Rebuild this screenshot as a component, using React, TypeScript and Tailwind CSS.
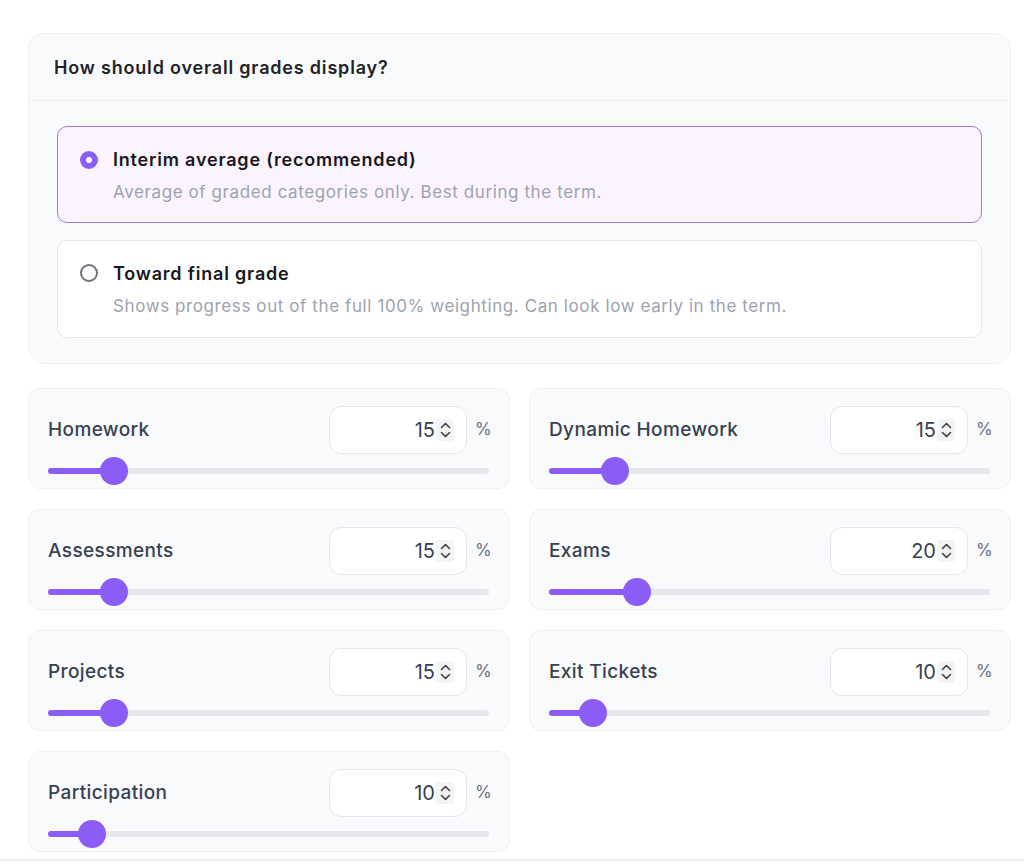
import React from "react";

const cats: { name: string; v: number }[] = [
  { name: "Homework", v: 15 },
  { name: "Dynamic Homework", v: 15 },
  { name: "Assessments", v: 15 },
  { name: "Exams", v: 20 },
  { name: "Projects", v: 15 },
  { name: "Exit Tickets", v: 10 },
  { name: "Participation", v: 10 },
];

function Spinner() {
  return (
    <span className="ml-[1px] flex h-[22px] w-[18px] items-center justify-center rounded-[4px] bg-[#f3f4f6]">
      <svg width="13" height="20" viewBox="0 0 13 20" fill="none" stroke="#3f3f46" strokeWidth="1.6" strokeLinecap="round" strokeLinejoin="round">
        <path d="M2.5 7.5 L6.5 3.5 L10.5 7.5" />
        <path d="M2.5 12.5 L6.5 16.5 L10.5 12.5" />
      </svg>
    </span>
  );
}

function SliderCard({ name, v }: { name: string; v: number }) {
  return (
    <div className="rounded-xl border border-[#eff1f3] bg-[#f9fafb] pl-[19px] pr-[20px] pt-[17px] pb-[4px]">
      <div className="flex h-[48px] items-center">
        <div className="flex-1 text-[19px] font-medium tracking-[0.02em] text-[#374151]">{name}</div>
        <div className="flex h-[48px] w-[138px] items-center justify-end rounded-xl border border-[#e5e7eb] bg-white pr-[12px]">
          <span className="text-[20px] text-[#374151]">{v}</span>
          <Spinner />
        </div>
        <div className="ml-[8px] w-[14px] text-[17px] text-[#6b7280]">%</div>
      </div>
      <div className="relative mt-[2px] h-[28px]">
        <div className="absolute left-0 right-0 top-[12px] h-[6px] rounded-full bg-[#e5e7eb]" />
        <div className="absolute left-0 top-[12px] h-[6px] rounded-full bg-[#8b5cf6]" style={{ width: `${v}%` }} />
        <div
          className="absolute top-[1px] h-[28px] w-[28px] -translate-x-1/2 rounded-full bg-[#8b5cf6]"
          style={{ left: `${v}%` }}
        />
      </div>
    </div>
  );
}

export default function App() {
  return (
    <div className="min-h-[862px] bg-white" style={{ fontFamily: "Inter, 'Noto Sans', sans-serif" }}>
      <div className="pl-[28px] pr-[13px] pt-[33px]">
        <div className="rounded-2xl border border-[#f0f1f3] bg-[#f9fafb]">
          <div className="flex h-[67px] items-center border-b border-[#f0f1f3] px-[25px] text-[18px] font-semibold tracking-[0.045em] text-[#1f2328]">
            How should overall grades display?
          </div>
          <div className="flex flex-col gap-[17px] px-[28px] pt-[25px] pb-[25px]">
            <div className="rounded-[10px] border-[1.5px] border-[#9b7fd6] bg-[#fbf4fe] pl-[22px] pt-[19px] pb-[16px]">
              <div className="flex items-center gap-[15px]">
                <span className="flex h-[18px] w-[18px] items-center justify-center rounded-full bg-[#8b5cf6]">
                  <span className="h-[6px] w-[6px] rounded-full bg-white" />
                </span>
                <span className="text-[18px] font-semibold tracking-[0.045em] text-[#18181b]">Interim average (recommended)</span>
              </div>
              <div className="mt-[7px] pl-[33px] text-[17px] tracking-[0.035em] text-[#9ca3af]">
                Average of graded categories only. Best during the term.
              </div>
            </div>
            <div className="rounded-[10px] border border-[#e5e7eb] bg-white pl-[22px] pt-[19px] pb-[18px]">
              <div className="flex items-center gap-[15px]">
                <span className="h-[18px] w-[18px] rounded-full border-2 border-[#71717a]" />
                <span className="text-[18px] font-semibold tracking-[0.045em] text-[#18181b]">Toward final grade</span>
              </div>
              <div className="mt-[7px] pl-[33px] text-[17px] tracking-[0.035em] text-[#9ca3af]">
                Shows progress out of the full 100% weighting. Can look low early in the term.
              </div>
            </div>
          </div>
        </div>

        <div className="mt-[24px] grid grid-cols-2 gap-x-[19px] gap-y-[20px]">
          {cats.map((c) => (
            <SliderCard key={c.name} name={c.name} v={c.v} />
          ))}
        </div>
      </div>
      <div className="mt-[7px] h-[10px] border-t border-[#eceef1] bg-[#f6f7f9]" />
    </div>
  );
}
